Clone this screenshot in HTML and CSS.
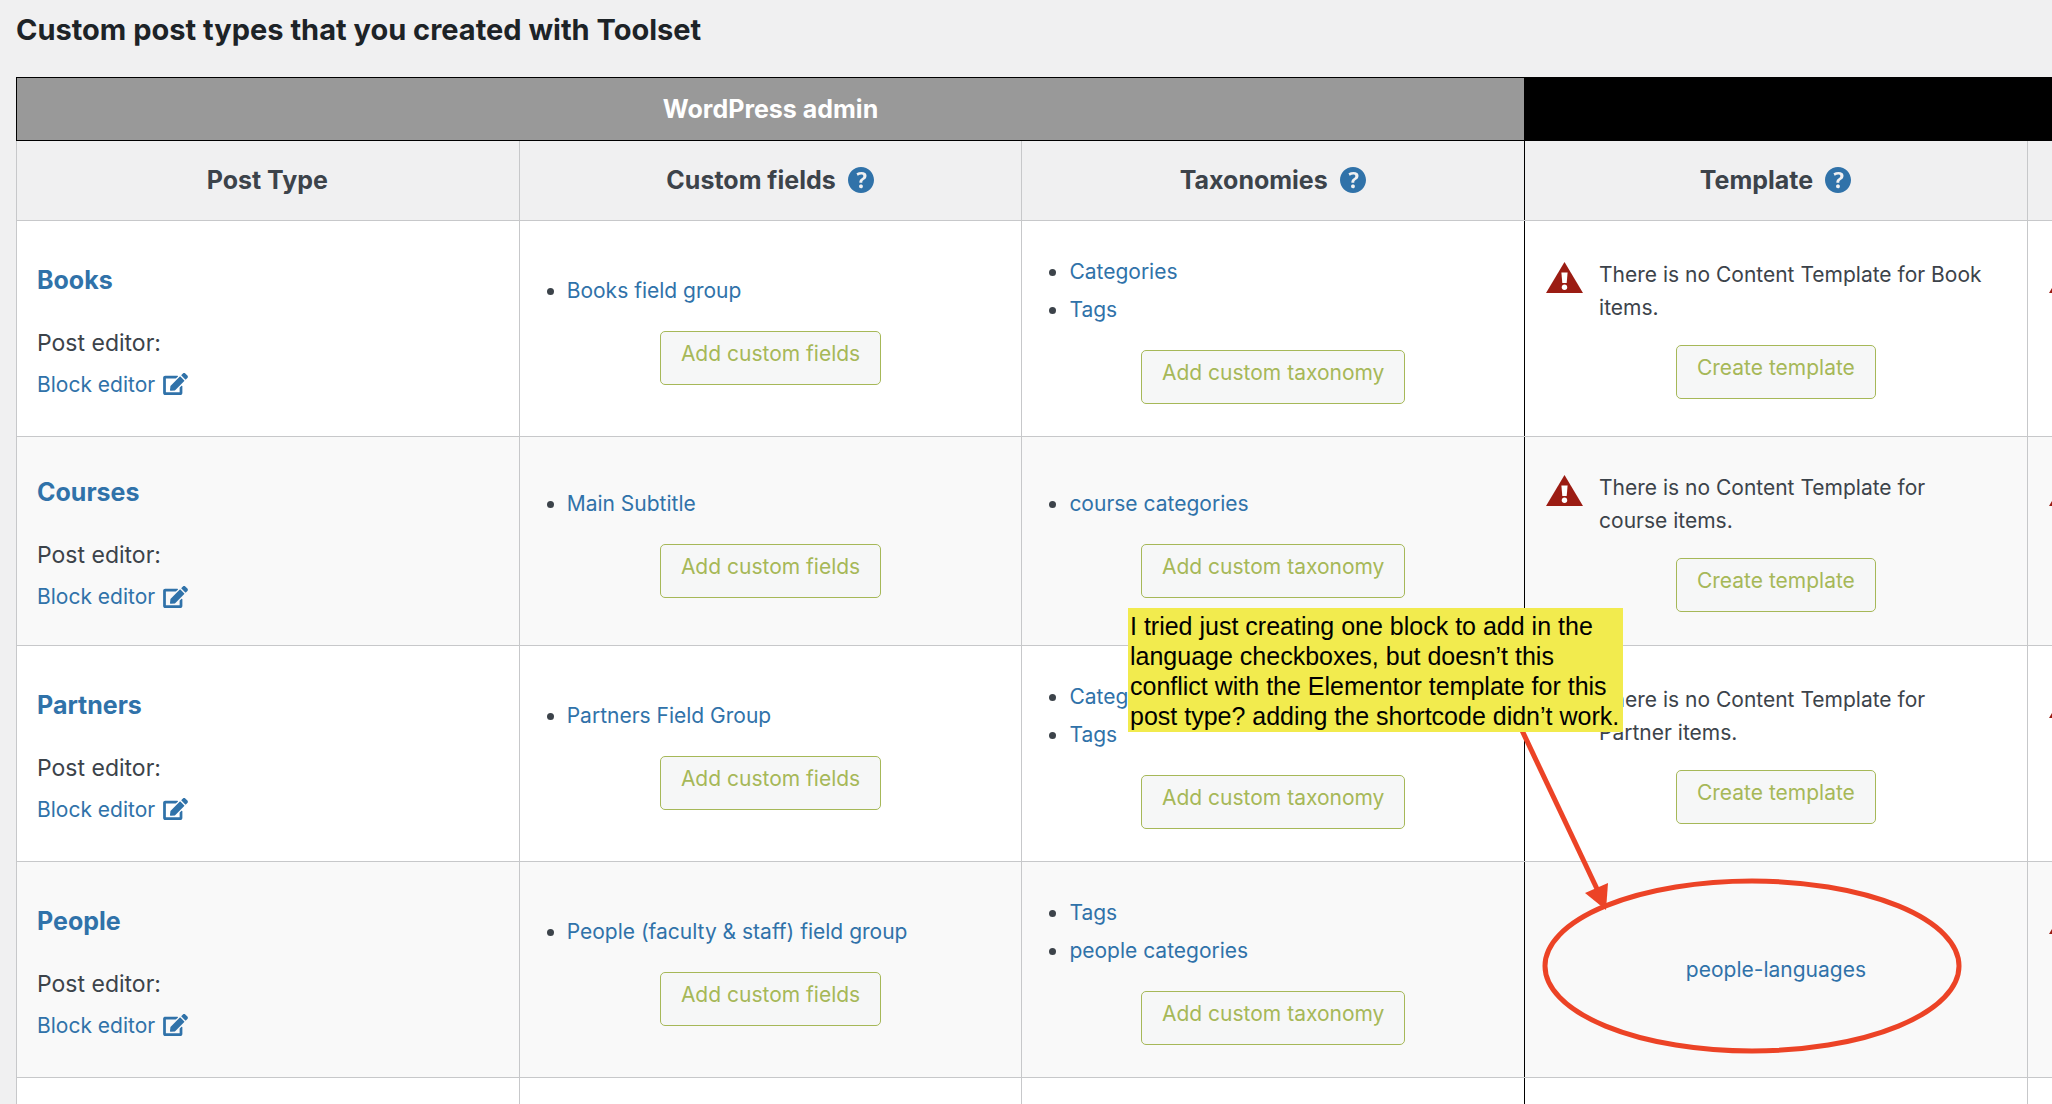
FILE: index.html
```html
<!DOCTYPE html>
<html lang="en">
<head>
<meta charset="utf-8">
<title>Toolset Dashboard</title>
<link rel="stylesheet" href="styles.css">
</head>
<body>
<svg class="sprite" aria-hidden="true">
  <symbol id="icon-help" viewBox="3 3 14 14"><path d="M17 10c0-3.87-3.14-7-7-7-3.87 0-7 3.13-7 7s3.13 7 7 7c3.86 0 7-3.13 7-7zm-6.3 1.48H9.14v-.43c0-.38.08-.7.24-.98s.46-.57.88-.89c.41-.29.68-.53.81-.71.14-.18.2-.39.2-.62 0-.25-.09-.44-.28-.58-.19-.13-.45-.19-.79-.19-.58 0-1.25.19-2 .57l-.64-1.28c.87-.49 1.8-.74 2.77-.74.81 0 1.45.2 1.92.58.48.39.71.91.71 1.55 0 .43-.09.8-.29 1.11-.19.32-.57.67-1.11 1.06-.38.28-.61.49-.71.63-.1.15-.15.34-.15.57v.35zm-1.47 2.74c-.18-.17-.27-.42-.27-.73 0-.33.08-.58.26-.75s.43-.25.77-.25c.32 0 .57.09.75.26s.27.42.27.74c0 .3-.09.55-.27.72-.18.18-.43.27-.75.27-.33 0-.58-.09-.75-.26z"/></symbol>
  <symbol id="icon-edit" viewBox="0 0 576 512"><path d="M402.6 83.2l90.2 90.2c3.8 3.8 3.8 10 0 13.8L274.4 405.6l-92.8 10.3c-12.4 1.4-22.9-9.1-21.5-21.5l10.3-92.8L388.8 83.2c3.8-3.8 10-3.8 13.8 0zm162-22.9l-48.8-48.8c-15.2-15.2-39.9-15.2-55.2 0l-35.4 35.4c-3.8 3.8-3.8 10 0 13.8l90.2 90.2c3.8 3.8 10 3.8 13.8 0l35.4-35.4c15.2-15.3 15.2-40 0-55.2zM384 346.2V448H64V128h229.8c3.2 0 6.2-1.3 8.5-3.5l40-40c7.6-7.6 2.2-20.5-8.5-20.5H48C21.5 64 0 85.5 0 112v352c0 26.5 21.5 48 48 48h352c26.5 0 48-21.5 48-48V306.2c0-10.7-12.9-16-20.5-8.5l-40 40c-2.2 2.3-3.5 5.3-3.5 8.5z"/></symbol>
  <symbol id="icon-warning" viewBox="0 0 37 31"><path d="M18.5 0L37 31H0z"/><path fill="#fff" d="M15.4 10.4h6.2l-.9 10.5h-4.4z"/><circle fill="#fff" cx="18.5" cy="25.3" r="2.7"/></symbol>
</svg>

<main class="dashboard">
  <h2 class="dashboard-title">Custom post types that you created with Toolset</h2>

  <table class="types">
    <thead>
      <tr class="group-row">
        <th class="group group-admin" colspan="3" scope="colgroup">WordPress admin</th>
        <th class="group group-front" colspan="2" scope="colgroup"></th>
      </tr>
      <tr class="label-row">
        <th scope="col">Post Type</th>
        <th scope="col"><span class="label">Custom fields <a href="#" class="help" aria-label="Help"><svg><use href="#icon-help"/></svg></a></span></th>
        <th scope="col"><span class="label">Taxonomies <a href="#" class="help" aria-label="Help"><svg><use href="#icon-help"/></svg></a></span></th>
        <th scope="col" class="front"><span class="label">Template <a href="#" class="help" aria-label="Help"><svg><use href="#icon-help"/></svg></a></span></th>
        <th></th>
      </tr>
    </thead>
    <tbody>
      <tr>
        <td class="type">
          <h3 class="type-name"><a href="#">Books</a></h3>
          <p class="type-label">Post editor:</p>
          <a href="#" class="editor">Block editor <svg><use href="#icon-edit"/></svg></a>
        </td>
        <td>
          <ul class="items"><li><a href="#">Books field group</a></li></ul>
          <div class="action"><button type="button" class="button">Add custom fields</button></div>
        </td>
        <td>
          <ul class="items"><li><a href="#">Categories</a></li><li><a href="#">Tags</a></li></ul>
          <div class="action"><button type="button" class="button">Add custom taxonomy</button></div>
        </td>
        <td class="front">
          <div class="alert"><svg><use href="#icon-warning"/></svg><p>There is no Content Template for Book items.</p></div>
          <div class="action"><button type="button" class="button">Create template</button></div>
        </td>
        <td><div class="alert alert-bare"><svg><use href="#icon-warning"/></svg></div></td>
      </tr>
      <tr>
        <td class="type">
          <h3 class="type-name"><a href="#">Courses</a></h3>
          <p class="type-label">Post editor:</p>
          <a href="#" class="editor">Block editor <svg><use href="#icon-edit"/></svg></a>
        </td>
        <td>
          <ul class="items"><li><a href="#">Main Subtitle</a></li></ul>
          <div class="action"><button type="button" class="button">Add custom fields</button></div>
        </td>
        <td>
          <ul class="items"><li><a href="#">course categories</a></li></ul>
          <div class="action"><button type="button" class="button">Add custom taxonomy</button></div>
        </td>
        <td class="front">
          <div class="alert"><svg><use href="#icon-warning"/></svg><p>There is no Content Template for course items.</p></div>
          <div class="action"><button type="button" class="button">Create template</button></div>
        </td>
        <td><div class="alert alert-bare"><svg><use href="#icon-warning"/></svg></div></td>
      </tr>
      <tr>
        <td class="type">
          <h3 class="type-name"><a href="#">Partners</a></h3>
          <p class="type-label">Post editor:</p>
          <a href="#" class="editor">Block editor <svg><use href="#icon-edit"/></svg></a>
        </td>
        <td>
          <ul class="items"><li><a href="#">Partners Field Group</a></li></ul>
          <div class="action"><button type="button" class="button">Add custom fields</button></div>
        </td>
        <td>
          <ul class="items"><li><a href="#">Categories</a></li><li><a href="#">Tags</a></li></ul>
          <div class="action"><button type="button" class="button">Add custom taxonomy</button></div>
        </td>
        <td class="front">
          <div class="alert"><svg><use href="#icon-warning"/></svg><p>There is no Content Template for Partner items.</p></div>
          <div class="action"><button type="button" class="button">Create template</button></div>
        </td>
        <td><div class="alert alert-bare"><svg><use href="#icon-warning"/></svg></div></td>
      </tr>
      <tr>
        <td class="type">
          <h3 class="type-name"><a href="#">People</a></h3>
          <p class="type-label">Post editor:</p>
          <a href="#" class="editor">Block editor <svg><use href="#icon-edit"/></svg></a>
        </td>
        <td>
          <ul class="items"><li><a href="#">People (faculty &amp; staff) field group</a></li></ul>
          <div class="action"><button type="button" class="button">Add custom fields</button></div>
        </td>
        <td>
          <ul class="items"><li><a href="#">Tags</a></li><li><a href="#">people categories</a></li></ul>
          <div class="action"><button type="button" class="button">Add custom taxonomy</button></div>
        </td>
        <td class="front template"><a href="#">people-languages</a></td>
        <td><div class="alert alert-bare"><svg><use href="#icon-warning"/></svg></div></td>
      </tr>
      <tr class="next-row"><td></td><td></td><td></td><td class="front"></td><td></td></tr>
    </tbody>
  </table>

  <svg class="markup" viewBox="0 0 480 360" aria-hidden="true">
    <ellipse cx="252" cy="266" rx="207" ry="85"/>
    <path d="M18 22L98 191"/>
    <path class="arrowhead" d="M106 210L85 193L108 183z"/>
  </svg>
  <p class="note">I tried just creating one block to add in the<br>language checkboxes, but doesn’t this<br>conflict with the Elementor template for this<br>post type? adding the shortcode didn’t work.</p>
</main>
</body>
</html>
```
FILE: styles.css
```css
* {
  box-sizing: border-box;
}

body {
  margin: 0;
  background: #f0f0f1;
  color: #3c434a;
  font: 21px/38px Inter, "Liberation Sans", sans-serif;
}

h2, h3, p, ul {
  margin: 0;
  padding: 0;
}

a {
  color: #3072a9;
  text-decoration: none;
}

svg {
  display: block;
  flex: none;
  fill: currentColor;
}

.sprite {
  position: absolute;
  width: 0;
  height: 0;
}

.dashboard {
  position: relative;
  padding: 12px 0 0 16px;
  overflow: hidden;
}

.dashboard-title {
  margin-bottom: 29px;
  color: #1d2327;
  font-size: 29px;
  font-weight: 700;
  line-height: 36px;
}

/* The table is wider than the window and is cut at its right edge. */
.types {
  width: 123.5%;
  table-layout: fixed;
  border-collapse: collapse;
  background: #fff;
}

.types th,
.types td {
  border: 1px solid #c7c8ca;
}

.types th {
  height: 80px;
  padding: 0 1px 2px 0;
  background: #f0f0f1;
  font-size: 25px;
  font-weight: 700;
  text-align: center;
}

.types .group {
  height: 63px;
  padding: 0;
  border-color: #000;
  color: #fff;
}

.types .group-admin {
  background: #999;
}

.types .group-front {
  background: #000;
}

.types td {
  padding: 32px 20px 31px;
  vertical-align: middle;
}

.types tbody tr:nth-child(even) {
  background: #f9f9f9;
}

.types th:nth-child(3),
.types td:nth-child(3) {
  border-right-color: #000;
}

.types .front {
  border-left-color: #000;
}

.types .next-row td {
  height: 28px;
  padding: 0;
}

.label {
  display: flex;
  align-items: center;
  justify-content: center;
  gap: 12px;
}

.help svg {
  width: 26px;
  height: 26px;
}

.types .type {
  padding-top: 37px;
  padding-bottom: 28px;
}

.type-name {
  margin-bottom: 25px;
  font-size: 25px;
  font-weight: 700;
  line-height: 36px;
}

.type-label {
  font-size: 23px;
  line-height: 41px;
}

.editor {
  display: flex;
  align-items: center;
  gap: 8px;
  line-height: 41px;
}

.editor svg {
  width: 25px;
  height: 22px;
}

.items {
  padding-left: 27px;
}

.action {
  margin-top: 21px;
  padding-bottom: 1px;
  text-align: center;
  line-height: 0;
}

.button {
  padding: 4px 20px 12px;
  border: 1px solid #a6b858;
  border-radius: 5px;
  background: #f6f7f7;
  color: #a6b858;
  font: inherit;
  line-height: 36px;
}

.alert {
  display: flex;
  align-items: flex-start;
  gap: 16px;
  padding-left: 1px;
  line-height: 33px;
}

.alert p {
  max-width: 392px;
}

.alert svg {
  width: 37px;
  height: 31px;
  margin-top: 4px;
  color: #9b1c13;
}

.alert-bare {
  min-height: 142px;
}

.types .template {
  text-align: center;
}

.markup {
  position: absolute;
  top: 700px;
  left: 1500px;
  width: 480px;
  height: 360px;
  fill: none;
  stroke: #ec4326;
  stroke-width: 5;
}

.arrowhead {
  fill: #ec4326;
  stroke: none;
}

.note {
  position: absolute;
  top: 608px;
  left: 1128px;
  padding: 3px 4px 1px 2px;
  background: #f2eb4e;
  color: #000;
  font-family: "Liberation Sans", sans-serif;
  font-size: 25px;
  line-height: 30px;
  white-space: nowrap;
}
```
